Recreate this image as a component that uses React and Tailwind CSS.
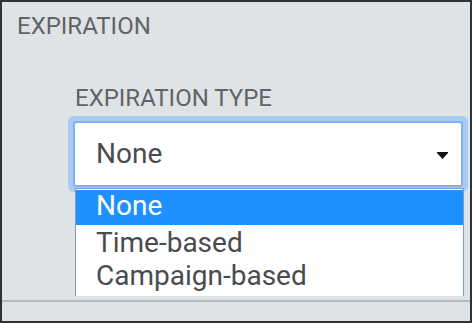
import React from "react";

export default function App() {
  return (
    <div className="w-[472px] h-[323px] border-2 border-[#303336] bg-[#dfe3e6] flex flex-col font-['Roboto',sans-serif] overflow-hidden">
      <div className="pl-[15px] pt-[10px] text-[24px] leading-[28px] text-[#5f6468]">EXPIRATION</div>
      <div className="pl-[73px] pt-[44px] pr-[2px] relative">
        <div className="text-[24px] leading-[28px] text-[#5f6468]">EXPIRATION TYPE</div>
        <div className="relative mt-[4px] -ml-[7px] w-[400px] h-[76px] rounded-[6px] bg-[#a9cbf1] p-[5px]">
          <div className="w-full h-full rounded-[3px] border-2 border-[#80b3ee] bg-white flex items-center pl-[21px] pr-[13px]">
            <span className="flex-1 text-[28px] leading-[32px] text-[#474c51]">None</span>
            <svg width="11" height="7" viewBox="0 0 11 7" className="mt-[2px]">
              <path d="M0 0 H11 V1 L5.5 7 L0 1 Z" fill="#111" />
            </svg>
          </div>
          <div className="absolute left-[7px] top-[72px] w-[389px] h-[108px] bg-white border border-b-0 border-[#7d9dc4] pt-[1px]">
            <div className="h-[35px] bg-[#1e90ff] text-white text-[28px] leading-[32px] pl-[20px]">None</div>
            <div className="h-[35px] text-[#474c51] text-[28px] leading-[35px] pl-[20px]">Time-based</div>
            <div className="h-[35px] text-[#474c51] text-[28px] leading-[31px] pl-[20px]">Campaign-based</div>
          </div>
        </div>
      </div>
      <div className="mt-auto h-[21px] border-t-2 border-[#b3bdc2]" />
    </div>
  );
}
